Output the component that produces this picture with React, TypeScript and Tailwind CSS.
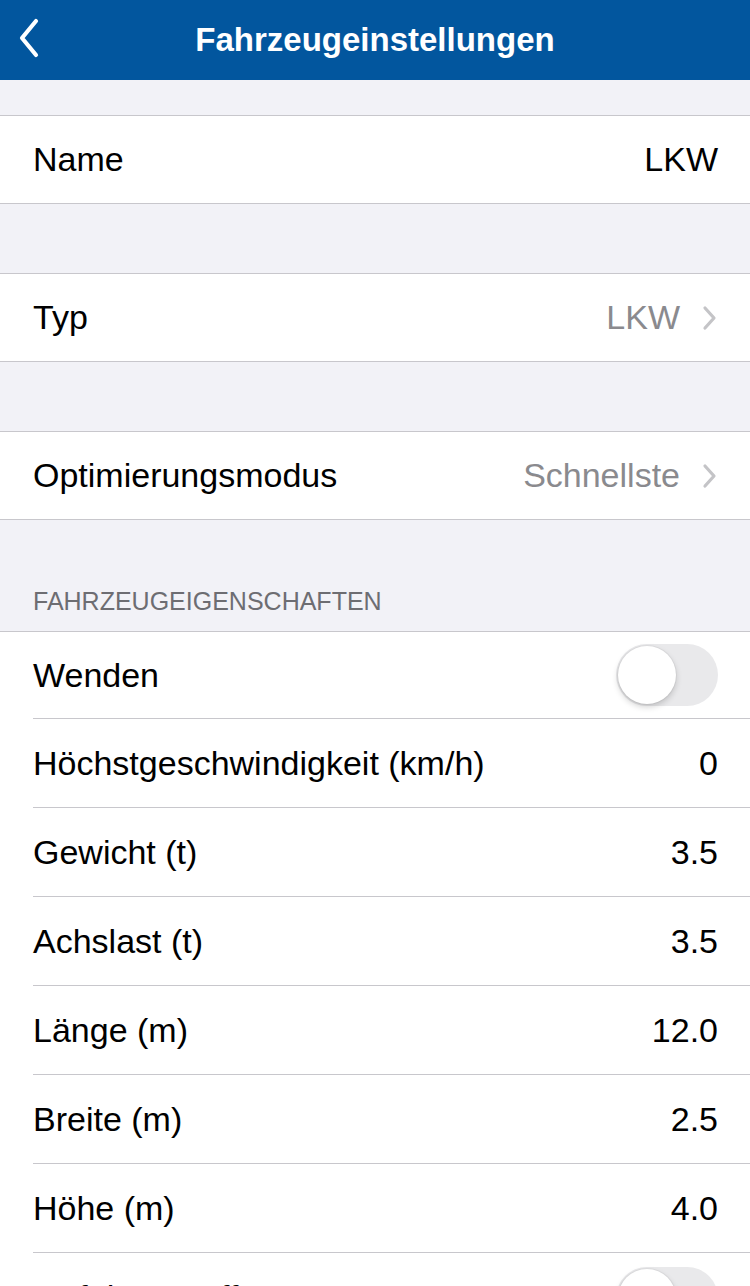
import React from "react";

const font = { fontFamily: '"Liberation Sans", Arial, sans-serif' };

function Chevron() {
  return (
    <svg width="16" height="26" viewBox="0 0 16 26" className="ml-[22px]">
      <path d="M3 3 L12 13 L3 23" fill="none" stroke="#c4c4c7" strokeWidth="3.2" strokeLinecap="round" strokeLinejoin="round" />
    </svg>
  );
}

function Toggle() {
  return (
    <div className="relative w-[102px] h-[62px] rounded-full bg-[#e9e9eb]">
      <div className="absolute left-[2px] top-[2px] w-[58px] h-[58px] rounded-full bg-white shadow-[0_3px_6px_rgba(0,0,0,0.18),0_0_0_1px_rgba(0,0,0,0.04)]" />
    </div>
  );
}

function PlainRow({ label, value, chevron }: { label: string; value: string; chevron?: boolean }) {
  return (
    <div className="h-[87px] bg-white flex items-center justify-between pl-[33px] pr-[32px]">
      <span className="text-[34px] text-black">{label}</span>
      <div className="flex items-center">
        <span className={`text-[34px] ${chevron ? "text-[#8a8a8e]" : "text-black"}`}>{value}</span>
        {chevron && <Chevron />}
      </div>
    </div>
  );
}

function ListRow({ label, value, toggle, first, last }: { label: string; value?: string; toggle?: boolean; first?: boolean; last?: boolean }) {
  return (
    <div className="bg-white pl-[33px]">
      <div className={`${first ? "h-[87px]" : "h-[89px]"} flex items-center justify-between pr-[32px] ${last ? "" : "border-b border-[#c8c7cc]"}`}>
        <span className="text-[34px] text-black whitespace-nowrap">{label}</span>
        {toggle ? <Toggle /> : <span className="text-[34px] text-black">{value}</span>}
      </div>
    </div>
  );
}

export default function App() {
  return (
    <div className="w-[750px] h-[1286px] overflow-hidden bg-[#f2f2f7]" style={font}>
      <div className="h-[80px] bg-[#02569e] flex items-center relative">
        <svg width="30" height="40" viewBox="0 0 30 40" className="absolute left-[14px] top-[18px]">
          <path d="M22 3 L8 20 L22 37" fill="none" stroke="white" strokeWidth="4.2" strokeLinecap="round" strokeLinejoin="round" />
        </svg>
        <div className="w-full text-center text-white text-[33px] font-semibold">Fahrzeugeinstellungen</div>
      </div>
      <div className="h-[35px]" />
      <div className="border-y border-[#c8c7cc]">
        <PlainRow label="Name" value="LKW" />
      </div>
      <div className="h-[69px]" />
      <div className="border-y border-[#c8c7cc]">
        <PlainRow label="Typ" value="LKW" chevron />
      </div>
      <div className="h-[69px]" />
      <div className="border-y border-[#c8c7cc]">
        <PlainRow label="Optimierungsmodus" value="Schnellste" chevron />
      </div>
      <div className="h-[111px] flex items-end pl-[33px] pb-[11px]">
        <span className="text-[25px] text-[#6d6d72]">FAHRZEUGEIGENSCHAFTEN</span>
      </div>
      <div className="border-t border-[#c8c7cc]">
        <ListRow label="Wenden" toggle first />
        <ListRow label="Höchstgeschwindigkeit (km/h)" value="0" />
        <ListRow label="Gewicht (t)" value="3.5" />
        <ListRow label="Achslast (t)" value="3.5" />
        <ListRow label="Länge (m)" value="12.0" />
        <ListRow label="Breite (m)" value="2.5" />
        <ListRow label="Höhe (m)" value="4.0" />
        <ListRow label="Gefahrenstoffe" toggle last />
      </div>
    </div>
  );
}
